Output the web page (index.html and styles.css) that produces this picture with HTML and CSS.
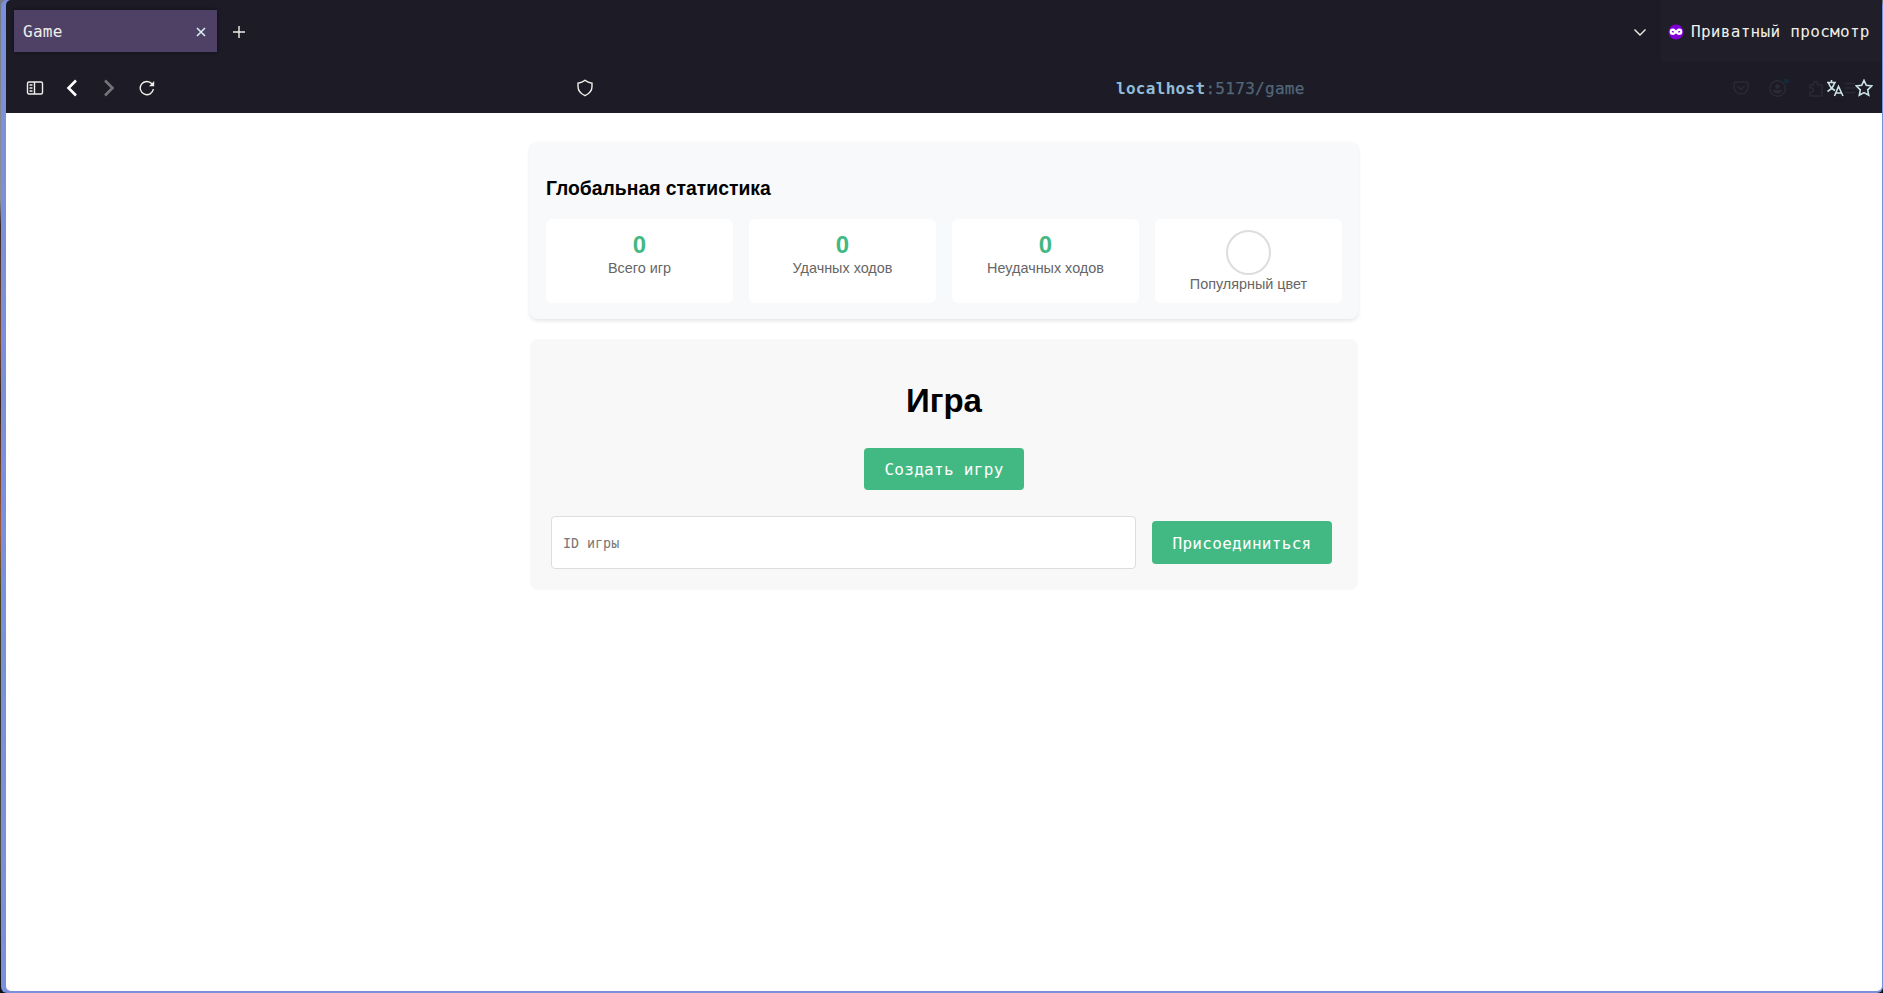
FILE: index.html
```html
<!DOCTYPE html>
<html lang="ru">
<head>
<meta charset="utf-8">
<title>Game</title>
<link rel="stylesheet" href="styles.css">
</head>
<body>
<div class="desktop">
<div class="window">
  <header class="chrome">
    <div class="tabbar">
      <div class="tab"><span>Game</span>
        <svg class="tab-close" width="10" height="10" viewBox="0 0 10 10"><path d="M1 1l8 8M9 1L1 9" /></svg>
      </div>
      <svg class="icon new-tab" width="14" height="14" viewBox="0 0 14 14"><path d="M7 1v12M1 7h12" /></svg>
      <div class="spacer"></div>
      <svg class="icon all-tabs" width="14" height="14" viewBox="0 0 14 14"><path d="M1.500 4.500L7 10l5.500-5.500" /></svg>
      <div class="private">
        <svg width="16" height="16" viewBox="0 0 16 16"><circle cx="8" cy="8" r="7.500" fill="#8000d7"/><path d="M8 6.500C6.800 5 5.900 4.600 4.900 4.600a3.100 3.100 0 0 0 0 6.400C6.200 11 6.900 10.200 8 9.300c1.100.9 1.800 1.700 3.100 1.700a3.100 3.100 0 0 0 0-6.400C10.100 4.600 9.200 5 8 6.500z" fill="#fff"/><path d="M3.700 7.500c.8-.7 1.700-.5 2.500.4-.9.800-1.900.9-2.500-.4zM12.300 7.500c-.8-.7-1.700-.5-2.500.4.900.8 1.900.9 2.500-.4z" fill="#8000d7"/></svg>
        <span>Приватный просмотр</span>
      </div>
    </div>
    <div class="toolbar">
      <svg class="icon" width="18" height="16" viewBox="0 0 18 16"><rect x="1.500" y="2" width="15" height="12" rx="1.500"/><path d="M8.500 2v12M3.500 5h3M3.500 8h3M3.500 11h3"/></svg>
      <svg class="icon back" width="12" height="18" viewBox="0 0 12 18"><path d="M10 1.500L2.500 9l7.500 7.500"/></svg>
      <svg class="icon forward" width="12" height="18" viewBox="0 0 12 18"><path d="M2 1.500L9.500 9 2 16.500"/></svg>
      <svg class="icon reload" width="16" height="16" viewBox="0 0 16 16"><path d="M14.400 9a6.600 6.600 0 1 1-1.500-5.200l1 1.200"/><path d="M15.200 1v5.200H10z" class="solid"/></svg>
      <svg class="icon shield" width="18" height="18" viewBox="0 0 18 18"><path d="M9 1.200c2 1.600 4.300 2.500 7 3v3.300c0 4.200-3.300 7.500-7 9.200-3.700-1.700-7-5-7-9.200V4.200c2.700-.5 5-1.400 7-3z"/></svg>
      <div class="url"><b>localhost</b>:5173/game</div>
      <div class="actions">
        <svg class="icon faint" width="16" height="16" viewBox="0 0 16 16"><path d="M2.500 2h11q1.500 0 1.500 1.500V7A7 7 0 0 1 1 7V3.500Q1 2 2.500 2zM4.500 6L8 9.500 11.500 6"/></svg>
        <svg class="icon faint account" width="22" height="20" viewBox="0 0 22 20"><circle cx="9.500" cy="10.500" r="7.800"/><circle cx="9.500" cy="8.500" r="2.300" class="solid"/><path class="solid" d="M5 12h9a4.500 3.500 0 0 1-9 0z"/><circle class="dot" cx="18.500" cy="3" r="2.500"/></svg>
        <svg class="icon faint puzzle" width="14" height="17" viewBox="0 0 14 17"><path d="M1 5h3.500V3.500a2 2 0 0 1 4 0V5H13v11H1v-4h1.500a2 2 0 0 0 0-4H1z"/></svg>
        <svg class="icon bright translate" width="18" height="17" viewBox="0 0 18 17"><path d="M1 2.500h9M5.500 0v2.500M2.500 2.500C3.500 6.500 6 9 9 10.500M8.500 2.500C7.500 7 5 9.500 1.500 11.500M8.500 16l4-9.500 4.500 9.500M10 13h5.500"/></svg>
        <svg class="icon faint menu" width="10" height="12" viewBox="0 0 10 12"><path d="M0 1.500h10M0 6h10M0 10.500h10"/></svg>
        <svg class="icon bright" width="18" height="18" viewBox="0 0 18 18"><path d="M9 1.300l2.300 5 5.400.7-4 3.800 1 5.500L9 13.600l-4.700 2.700 1-5.500-4-3.800 5.400-.7z"/></svg>
      </div>
    </div>
  </header>
  <main class="page">
    <section class="stats">
      <h3>Глобальная статистика</h3>
      <div class="grid">
        <div class="stat"><div class="value">0</div><div class="label">Всего игр</div></div>
        <div class="stat"><div class="value">0</div><div class="label">Удачных ходов</div></div>
        <div class="stat"><div class="value">0</div><div class="label">Неудачных ходов</div></div>
        <div class="stat color"><div class="swatch"></div><div class="label">Популярный цвет</div></div>
      </div>
    </section>
    <section class="game">
      <h1>Игра</h1>
      <button class="create">Создать игру</button>
      <div class="join">
        <input placeholder="ID игры">
        <button>Присоединиться</button>
      </div>
    </section>
  </main>
</div>
</div>
</body>
</html>
```
FILE: styles.css
```css
* { box-sizing: border-box; }
body { margin: 0; font-family: "Liberation Sans", Arial, sans-serif; }
.desktop { width: 1883px; height: 993px; overflow: hidden; padding-left: 1px; background: linear-gradient(#777a85 0, #8d8f94 200px, #3a2a26 225px, #7a4a35 340px, #3a2418 400px, #a05a3c 530px, #4a4a1c 590px, #33352f 720px, #4a4e42 850px, #0c0e10 993px); }
.window { height: 993px; border-style: solid; border-color: #7b90dc; border-width: 0 1px 2px 5px; border-radius: 6px; background: #7b90dc; display: flex; flex-direction: column; }
.chrome { height: 113px; background: #1c1b26; border-radius: 5px 5px 0 0; font: 16px/20px "DejaVu Sans Mono", monospace; letter-spacing: .3px; color: #f0eee8; }
.tabbar { height: 62px; padding-top: 1px; display: flex; align-items: center; }
.tab { width: 203px; height: 42px; margin: -1px 0 0 8px; padding: 1px 11px 0 9px; display: flex; align-items: center; justify-content: space-between; background: #4f4166; box-shadow: 0 0 3px rgba(0,0,0,.5); }
.tab-close { fill: none; stroke: #d9eef2; stroke-width: 1.6; }
.icon { fill: none; stroke: #f0f0ea; stroke-width: 1.4; flex: none; }
.icon .solid { fill: currentColor; stroke: none; }
.new-tab { margin-left: 15px; }
.spacer { flex: 1; }
.all-tabs { margin-right: 14px; }
.private { width: 221px; height: 62px; margin-top: -1px; padding: 1px 0 0 7px; background: #201f29; display: flex; align-items: center; gap: 7px; white-space: nowrap; }
.toolbar { height: 51px; padding: 1px 9px 0 20px; display: flex; align-items: center; }
.back { margin-left: 22px; stroke: #fff; stroke-width: 2.6; }
.forward { margin-left: 25px; stroke: #74747b; stroke-width: 2.6; }
.reload { margin-left: 24px; }
.shield { margin-left: 421px; }
.url { margin: 1px 0 0 522px; color: #536778; -webkit-text-stroke: .25px; }
.url b { color: #92bdd8; -webkit-text-stroke: 0; }
.actions { margin-left: auto; display: flex; align-items: center; }
.faint { stroke: #2b2b35; color: #2b2b35; }
.account { margin-left: 19px; }
.account .dot { fill: #152b3b; stroke: none; }
.puzzle { margin-left: 19px; }
.translate { margin-left: 3px; }
.menu { margin-left: 1px; }
.bright { stroke: #cce3e8; stroke-width: 1.6; }
.page { flex: 1; background: #fff; border-radius: 0 0 5px 5px; padding-top: 29px; display: flex; flex-direction: column; align-items: center; }
.stats { width: 828px; height: 177px; padding: 16px; background: #f8f9fb; border-radius: 8px; box-shadow: 0 2px 4px rgba(0,0,0,.1); }
.stats h3 { margin: 19px 0 20px; font-size: 19.350px; line-height: 22px; white-space: nowrap; }
.grid { display: grid; grid-template-columns: repeat(4, 1fr); gap: 16px; }
.stat { height: 84px; background: #fff; border-radius: 6px; padding-top: 12px; text-align: center; }
.value { height: 28px; font-size: 24px; line-height: 28px; font-weight: bold; color: #42b983; }
.label { font-size: 14.400px; line-height: 18px; color: #666; }
.color { padding-top: 11px; }
.swatch { width: 45px; height: 45px; margin: 0 auto; border: 2px solid #ddd; border-radius: 50%; }
.game { width: 828px; height: 251px; margin-top: 20px; padding: 20px; background: #f8f8f8; border-radius: 8px; display: flex; flex-direction: column; align-items: center; }
.game h1 { margin: 23px 0 28px; font-size: 33px; line-height: 38px; }
.game button { flex: none; height: 43px; padding: 1px 0 0; border: 0; border-radius: 4px; background: #42b983; color: #fff; font: 16px "DejaVu Sans Mono", monospace; letter-spacing: .3px; white-space: nowrap; }
.game .create { width: 160px; height: 42px; }
.join { align-self: stretch; margin-top: 26px; padding: 0 6px 0 1px; display: flex; align-items: center; gap: 16px; }
.join button { width: 180px; }
.join input { flex: 1; min-width: 0; height: 53px; padding: 2px 11px 0; border: 1px solid #ddd; border-radius: 4px; font: 13.333px "DejaVu Sans Mono", monospace; }
.join input::placeholder { color: #777; }
```
